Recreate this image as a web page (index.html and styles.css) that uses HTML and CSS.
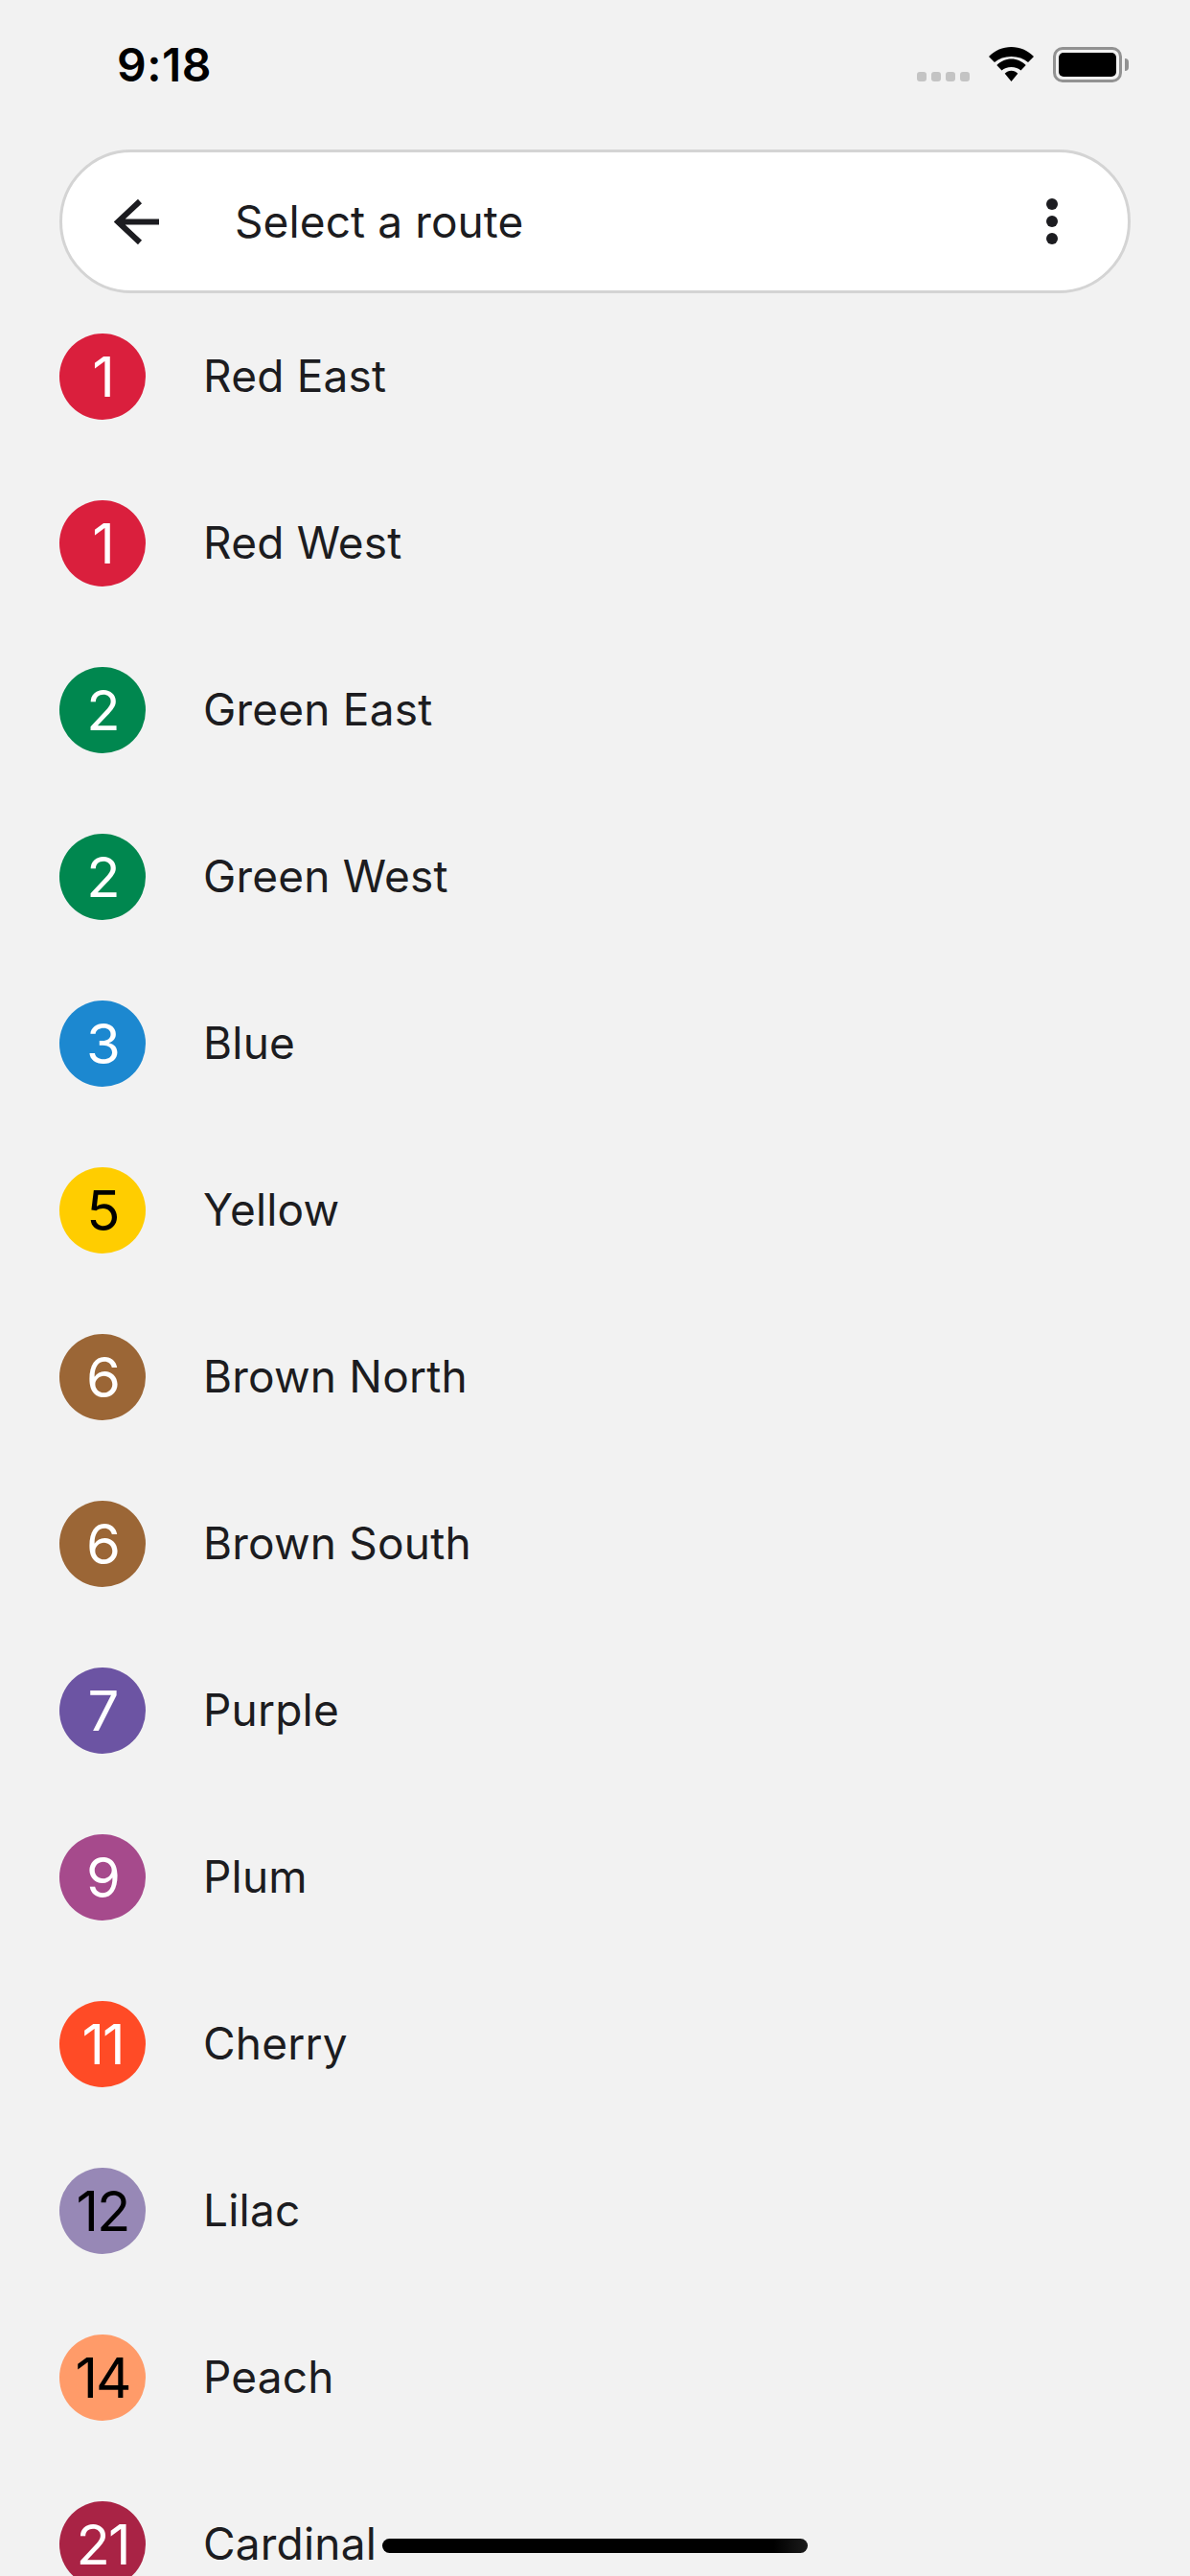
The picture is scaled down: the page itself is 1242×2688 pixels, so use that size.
FILE: index.html
```html
<!DOCTYPE html>
<html lang="en">
<head>
<meta charset="utf-8">
<title>Select a route</title>
<link rel="stylesheet" href="styles.css">
</head>
<body>
<div class="screen">
  <div class="status">
    <span class="time">9:18</span>
    <div class="status-icons">
      <div class="signal"><i></i><i></i><i></i><i></i></div>
      <svg class="wifi" width="47" height="36" viewBox="0 0 47 36"><path d="M23.500 0C14.500 0 6.500 3.500 0 10L6 16C10.500 12 16.500 10 23.500 10S36.500 12 41 16L47 10C40.500 3.500 32.500 0 23.500 0Z"/><path d="M23.500 12.500C17.500 12.500 12.500 15 8.300 19L13.500 24.500C16 22.300 19.500 21 23.500 21S31 22.300 33.500 24.500L38.700 19C34.500 15 29.500 12.500 23.500 12.500Z"/><path d="M23.500 24.700C21 24.700 18.500 25.700 16.700 27.700L23.500 36L30.300 27.700C28.500 25.700 26 24.700 23.500 24.700Z"/></svg>
      <div class="battery"><div class="battery-body"><div class="battery-fill"></div></div><div class="battery-cap"></div></div>
    </div>
  </div>
  <header class="bar">
    <svg class="back" width="47" height="47" viewBox="0 0 47 47"><path d="M47 23.500H5M27 2L4 23.500L27 45" fill="none" stroke="#1c1c20" stroke-width="6"/></svg>
    <h1 class="title">Select a route</h1>
    <div class="more"><i></i><i></i><i></i></div>
  </header>
  <ul class="routes">
    <li class="route"><span class="badge red">1</span><span class="name">Red East</span></li>
    <li class="route"><span class="badge red">1</span><span class="name">Red West</span></li>
    <li class="route"><span class="badge green">2</span><span class="name">Green East</span></li>
    <li class="route"><span class="badge green">2</span><span class="name">Green West</span></li>
    <li class="route"><span class="badge blue">3</span><span class="name">Blue</span></li>
    <li class="route"><span class="badge yellow">5</span><span class="name">Yellow</span></li>
    <li class="route"><span class="badge brown">6</span><span class="name">Brown North</span></li>
    <li class="route"><span class="badge brown">6</span><span class="name">Brown South</span></li>
    <li class="route"><span class="badge purple">7</span><span class="name">Purple</span></li>
    <li class="route"><span class="badge plum">9</span><span class="name">Plum</span></li>
    <li class="route"><span class="badge cherry">11</span><span class="name">Cherry</span></li>
    <li class="route"><span class="badge lilac">12</span><span class="name">Lilac</span></li>
    <li class="route"><span class="badge peach">14</span><span class="name">Peach</span></li>
    <li class="route"><span class="badge cardinal">21</span><span class="name">Cardinal</span></li>
  </ul>
  <div class="home"></div>
</div>
</body>
</html>
```
FILE: styles.css
```css
* { box-sizing: border-box; }
html, body { margin: 0; padding: 0; }
body { font-family: Inter, "Liberation Sans", sans-serif; background: #f2f2f2; }
.screen { position: relative; width: 1242px; height: 2688px; overflow: hidden; background: #f2f2f2; }
.status { height: 156px; display: flex; justify-content: space-between; align-items: flex-start; padding: 42px 64px 0 122px; }
.time { font-size: 48px; line-height: 52px; font-weight: 600; color: #000; letter-spacing: 0.5px; }
.status-icons { display: flex; align-items: flex-start; padding-top: 7px; }
.signal { display: flex; gap: 5px; margin-top: 26px; margin-right: 20px; }
.signal i { display: block; width: 10px; height: 10px; border-radius: 3px; background: #c4c4c4; }
.wifi { display: block; margin-right: 20px; }
.battery { display: flex; align-items: center; }
.battery-body { width: 72px; height: 37px; border: 3px solid #929292; border-radius: 10px; padding: 3px; }
.battery-fill { width: 100%; height: 100%; background: #000; border-radius: 5px; }
.battery-cap { width: 4px; height: 13px; margin-left: 3px; background: #929292; border-radius: 0 4px 4px 0; }
.bar { height: 150px; margin: 0 62px; display: flex; align-items: center; background: #fff; border: 3px solid #d4d4d4; border-radius: 75px; padding: 0 73px 0 54px; }
.back { display: block; flex: none; }
.title { flex: 1; margin: 0 0 0 79px; font-size: 46px; line-height: 56px; font-weight: 400; color: #1c1c20; letter-spacing: 0.1px; }
.more { display: flex; flex-direction: column; gap: 6px; }
.more i { display: block; width: 12px; height: 12px; border-radius: 50%; background: #1c1c20; }
.routes { list-style: none; margin: 0; padding: 0 0 0 62px; }
.route { height: 174px; display: flex; align-items: center; }
.badge { flex: none; width: 90px; height: 90px; border-radius: 50%; display: flex; align-items: center; justify-content: center; font-size: 58px; font-weight: 400; color: #fff; letter-spacing: -2px; }
.name { margin: 0 0 2px 60px; font-size: 46px; line-height: 56px; color: #1c1c20; letter-spacing: 0.2px; }
.red { background: #da1f3d; }
.green { background: #00874f; }
.blue { background: #1c88d0; }
.yellow { background: #ffcd00; color: #000; }
.brown { background: #9b6636; }
.purple { background: #6c54a3; }
.plum { background: #a64a8c; }
.cherry { background: #ff4b26; }
.lilac { background: #9788b6; color: #000; }
.peach { background: #ff9b69; color: #000; }
.cardinal { background: #a92345; }
.home { position: absolute; left: 399px; top: 2649px; width: 444px; height: 15px; border-radius: 8px; background: linear-gradient(90deg, #000 92%, #1c1c1c 100%); }
```
